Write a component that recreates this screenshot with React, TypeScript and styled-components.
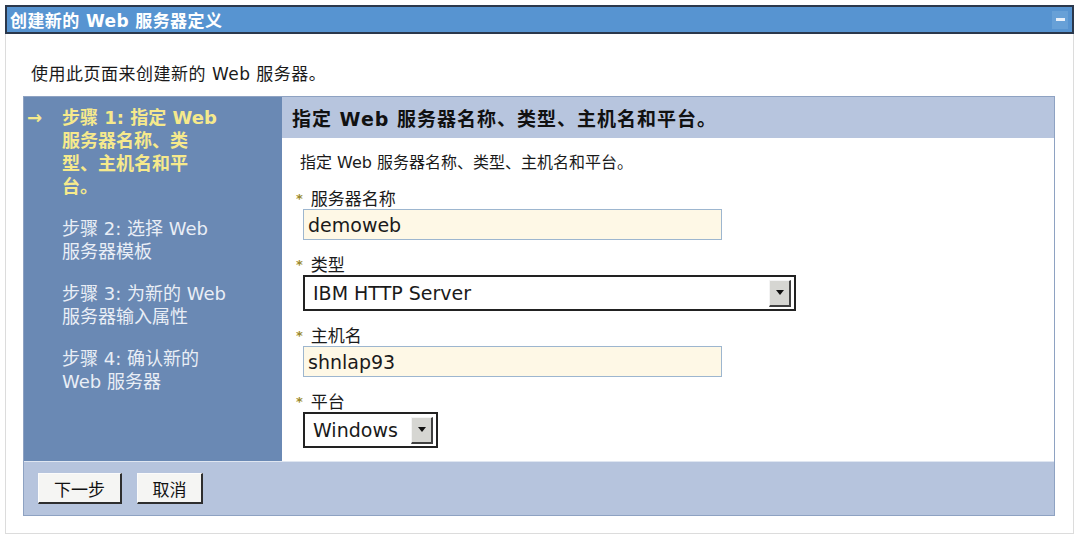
import React from "react";
import styled, { createGlobalStyle } from "styled-components";

const GlobalStyle = createGlobalStyle`
  html, body {
    margin: 0;
    padding: 0;
    background: #ffffff;
  }
  body {
    font-family: "DejaVu Sans", "Noto Sans CJK SC", sans-serif;
    color: #1a1a1a;
  }
`;

const Page = styled.div`
  padding: 5px 6px 5px 5px;
  width: 1080px;
  height: 539px;
  box-sizing: border-box;
`;

const TitleBar = styled.div`
  display: flex;
  align-items: center;
  justify-content: space-between;
  height: 29px;
  box-sizing: border-box;
  border: 2px solid #2b384c;
  background: #5794d1;
  padding: 0 4px 0 3px;
`;

const Title = styled.h1`
  margin: 0;
  font-size: 17px;
  font-weight: bold;
  color: #ffffff;
  letter-spacing: 0.4px;
`;

const Minimize = styled.button`
  display: flex;
  align-items: center;
  justify-content: center;
  width: 16px;
  height: 18px;
  padding: 0;
  border: none;
  background: #67a0d7;
  cursor: pointer;

  &::before {
    content: "";
    display: block;
    width: 9px;
    height: 3px;
    background: #e8f0fa;
  }
`;

const Panel = styled.section`
  border: 1px solid #dcdcdc;
  border-top: none;
  padding: 29px 18px 17px 17px;
  height: 500px;
  box-sizing: border-box;
  display: flex;
  flex-direction: column;
`;

const Intro = styled.p`
  margin: 0 0 10px 8px;
  font-size: 17px;
  line-height: 23px;
  letter-spacing: 0.5px;
`;

const Wizard = styled.div`
  display: grid;
  grid-template-columns: 258px 1fr;
  grid-template-rows: 364px 1fr;
  border: 1px solid #8ea2c2;
  flex: 1;
`;

const StepNav = styled.nav`
  background: #6a89b4;
  padding: 9px 0 0 3px;
`;

const Step = styled.div<{ $current?: boolean }>`
  display: flex;
  margin-bottom: 19px;
  font-size: 18px;
  line-height: 23px;
  font-weight: ${(p) => (p.$current ? "bold" : "normal")};
  color: ${(p) => (p.$current ? "#f6e98c" : "#e9eef6")};
`;

const Arrow = styled.span`
  width: 35px;
  flex: none;
  font-weight: bold;
  color: #f6e98c;
`;

const StepLines = styled.div`
  display: flex;
  flex-direction: column;
  white-space: nowrap;
`;

const Main = styled.div`
  display: flex;
  flex-direction: column;
  background: #ffffff;
`;

const StepHeader = styled.h2`
  margin: 0;
  height: 41px;
  display: flex;
  align-items: center;
  padding-left: 10px;
  background: #b7c5de;
  font-size: 19px;
  font-weight: bold;
  letter-spacing: 1px;
  color: #111111;
`;

const Content = styled.div`
  padding: 15px 0 0 14px;
  display: flex;
  flex-direction: column;
  gap: 16px;
`;

const Lead = styled.p`
  margin: 0 0 1px 4px;
  font-size: 16px;
  line-height: 20px;
`;

const Field = styled.div`
  display: flex;
  flex-direction: column;
  gap: 1px;
`;

const Label = styled.label`
  display: flex;
  align-items: center;
  gap: 8px;
  font-size: 17px;
  line-height: 18px;
`;

const Star = styled.span`
  color: #9b8a2e;
  font-size: 13px;
  font-weight: bold;
`;

const TextInput = styled.input`
  margin-left: 7px;
  width: 419px;
  height: 31px;
  box-sizing: border-box;
  border: 1px solid #9db6cf;
  background: #fef8e6;
  padding: 0 4px;
  font-family: "DejaVu Sans", "Noto Sans CJK SC", sans-serif;
  font-size: 19px;
  color: #1a1a1a;
  outline: none;
`;

const SelectBox = styled.div<{ $width: number }>`
  margin-left: 7px;
  width: ${(p) => p.$width}px;
  height: 36px;
  box-sizing: border-box;
  border: 2px solid #222222;
  display: flex;
  align-items: center;
  justify-content: space-between;
  padding: 0 3px 0 8px;
  background: #ffffff;
  font-size: 19px;
  color: #1a1a1a;
`;

const DropButton = styled.span`
  width: 22px;
  height: 27px;
  box-sizing: border-box;
  display: flex;
  align-items: center;
  justify-content: center;
  background: #d6d6d2;
  border-top: 1px solid #f4f4f4;
  border-left: 1px solid #f4f4f4;
  border-right: 2px solid #404040;
  border-bottom: 2px solid #404040;

  &::before {
    content: "";
    border-left: 4px solid transparent;
    border-right: 4px solid transparent;
    border-top: 5px solid #111111;
  }
`;

const Footer = styled.div`
  grid-column: 1 / span 2;
  background: #b6c4dd;
  border-top: 1px solid #dfe6f1;
  display: flex;
  align-items: flex-start;
  gap: 15px;
  padding: 11px 0 0 14px;
`;

const Button = styled.button<{ $width: number }>`
  width: ${(p) => p.$width}px;
  height: 31px;
  box-sizing: border-box;
  background: #f5f5f3;
  border-top: 1px solid #fbfbfb;
  border-left: 1px solid #fbfbfb;
  border-right: 2px solid #2e2e2e;
  border-bottom: 2px solid #2e2e2e;
  font-family: "DejaVu Sans", "Noto Sans CJK SC", sans-serif;
  font-size: 17px;
  color: #111111;
  padding: 0;
  cursor: pointer;
`;

type StepItem = { lines: string[]; current?: boolean };

const steps: StepItem[] = [
  { lines: ["步骤 1: 指定 Web", "服务器名称、类", "型、主机名和平", "台。"], current: true },
  { lines: ["步骤 2: 选择 Web", "服务器模板"] },
  { lines: ["步骤 3: 为新的 Web", "服务器输入属性"] },
  { lines: ["步骤 4: 确认新的", "Web 服务器"] },
];

export default function App() {
  return (
    <>
      <GlobalStyle />
      <Page>
        <TitleBar>
          <Title>创建新的 Web 服务器定义</Title>
          <Minimize aria-label="最小化" />
        </TitleBar>
        <Panel>
          <Intro>使用此页面来创建新的 Web 服务器。</Intro>
          <Wizard>
            <StepNav>
              {steps.map((s, i) => (
                <Step key={i} $current={s.current}>
                  <Arrow>{s.current ? "→" : ""}</Arrow>
                  <StepLines>
                    {s.lines.map((l) => (
                      <span key={l}>{l}</span>
                    ))}
                  </StepLines>
                </Step>
              ))}
            </StepNav>
            <Main>
              <StepHeader>指定 Web 服务器名称、类型、主机名和平台。</StepHeader>
              <Content>
                <Lead>指定 Web 服务器名称、类型、主机名和平台。</Lead>
                <Field>
                  <Label>
                    <Star>*</Star>服务器名称
                  </Label>
                  <TextInput defaultValue="demoweb" />
                </Field>
                <Field>
                  <Label>
                    <Star>*</Star>类型
                  </Label>
                  <SelectBox $width={493}>
                    IBM HTTP Server
                    <DropButton />
                  </SelectBox>
                </Field>
                <Field>
                  <Label>
                    <Star>*</Star>主机名
                  </Label>
                  <TextInput defaultValue="shnlap93" />
                </Field>
                <Field>
                  <Label>
                    <Star>*</Star>平台
                  </Label>
                  <SelectBox $width={135}>
                    Windows
                    <DropButton />
                  </SelectBox>
                </Field>
              </Content>
            </Main>
            <Footer>
              <Button $width={84}>下一步</Button>
              <Button $width={66}>取消</Button>
            </Footer>
          </Wizard>
        </Panel>
      </Page>
    </>
  );
}
